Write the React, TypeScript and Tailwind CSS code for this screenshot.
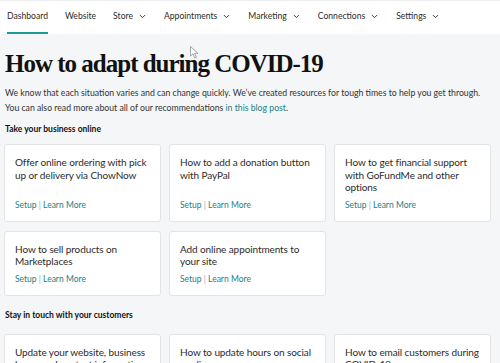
import { ChevronDown } from 'lucide-react';

const nav = [
  { label: 'Dashboard', active: true },
  { label: 'Website' },
  { label: 'Store', menu: true },
  { label: 'Appointments', menu: true },
  { label: 'Marketing', menu: true },
  { label: 'Connections', menu: true },
  { label: 'Settings', menu: true },
];

const online = [
  'Offer online ordering with pick up or delivery via ChowNow',
  'How to add a donation button with PayPal',
  'How to get financial support with GoFundMe and other options',
  'How to sell products on Marketplaces',
  'Add online appointments to your site',
];

const touch = [
  'Update your website, business hours and contact information',
  'How to update hours on social media',
  'How to email customers during COVID-19',
];

function Card({ title }: { title: string }) {
  return (
    <div className="flex flex-col bg-white border border-[#e2e4e6] rounded-[3px] px-[10px] pt-[11px] pb-[10px]">
      <div className="text-[10px] leading-[12.5px] tracking-[-0.1px] text-[#2b2b2b] mb-[5px]">{title}</div>
      <div className="mt-auto text-[8.5px] leading-[12px] text-[#1b7f86]">
        Setup <span className="text-[#9aa]">|</span> Learn More
      </div>
    </div>
  );
}

export default function App() {
  return (
    <div
      className="relative w-[500px] h-[363px] overflow-hidden bg-[#f5f6f7]"
      style={{ fontFamily: 'Lato, "Liberation Sans", sans-serif' }}
    >
      {/* nav */}
      <div className="h-[34px] bg-white border-t border-[#eceeef] flex items-stretch pl-[7px] gap-[17px]">
        {nav.map((n) => (
          <div
            key={n.label}
            className={`flex items-center gap-[5px] text-[8.6px] text-[#2b2b2b] border-b-2 ${
              n.active ? 'border-[#1b9a9a]' : 'border-transparent'
            }`}
          >
            {n.label}
            {n.menu && <ChevronDown size={9} strokeWidth={2.5} />}
          </div>
        ))}
      </div>

      <div className="px-[5px]">
        <h1
          className="mt-[15px] text-[25px] leading-[30px] font-bold text-[#111] tracking-[-1px]"
          style={{ fontFamily: '"Liberation Serif", serif' }}
        >
          How to adapt during COVID-19
        </h1>
        <p className="mt-[6px] text-[8.7px] leading-[15px] text-[#333] whitespace-nowrap">
          We know that each situation varies and can change quickly. We’ve created resources for tough times to help you get through.
          <br />
          You can also read more about all of our recommendations{' '}
          <span className="text-[#1b7f86]">in this blog post</span>.
        </p>
        <div className="mt-[7px] text-[8.5px] font-bold text-[#111] leading-[14px]">Take your business online</div>
      </div>

      <div className="ml-[4px] mt-[8px] w-[487px] grid grid-cols-3 gap-x-[8px] gap-y-[9px]">
        {online.map((t) => (
          <Card key={t} title={t} />
        ))}
      </div>

      <div className="px-[5px] mt-[12px] text-[8.5px] font-bold text-[#111] leading-[14px]">
        Stay in touch with your customers
      </div>
      <div className="ml-[4px] mt-[12px] w-[487px] grid grid-cols-3 gap-x-[8px]">
        {touch.map((t) => (
          <Card key={t} title={t} />
        ))}
      </div>

      {/* mouse pointer */}
      <svg className="absolute left-[190px] top-[46px]" width="9" height="13" viewBox="0 0 9 13">
        <path d="M0.5 0.5 L0.5 10 L3 7.8 L4.8 12 L6.3 11.3 L4.6 7.3 L8 7.3 Z" fill="#fff" stroke="#8a8f94" strokeWidth="0.8" />
      </svg>
    </div>
  );
}
